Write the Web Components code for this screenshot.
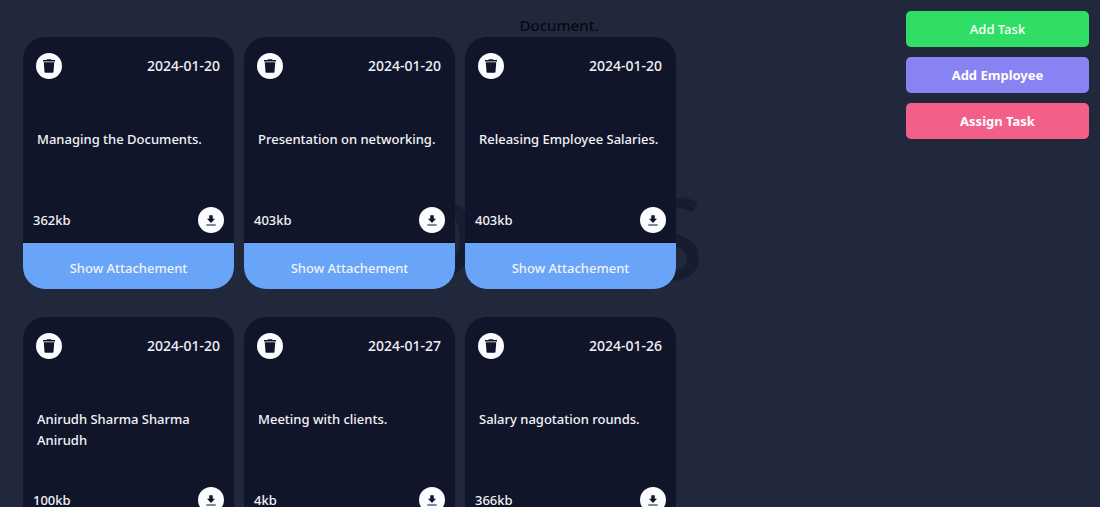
<!DOCTYPE html>
<html lang="en">
<head>
<meta charset="utf-8">
<title>Documents</title>
<style>
html, body { margin: 0; height: 100%; }
body {
  background: #22283b;
  color: #f1f3f8;
  font: 500 13px/21px "Noto Sans", "Open Sans", sans-serif;
  overflow: hidden;
}
</style>
</head>
<body>
<docs-app></docs-app>

<script>
class DocsBackdrop extends HTMLElement {
  constructor() {
    super();
    this.attachShadow({ mode: 'open' }).innerHTML = `
      <style>
        :host { position: absolute; inset: 0; display: flex; flex-direction: column; align-items: center; color: #060810; }
        p { margin: 0; padding: 15px 0 0 18px; font-size: 15px; }
        h1 { margin: auto 0; padding-bottom: 72px; color: #171d31; font-size: 114px; line-height: 114px; font-weight: 500; }
      </style>
      <p>Document.</p>
      <h1>DOCS</h1>`;
  }
}
customElements.define('docs-backdrop', DocsBackdrop);

class IconButton extends HTMLElement {
  constructor() {
    super();
    const trash = '<path d="M6 19.5c0 .9.7 1.5 1.6 1.5h8.800c.9 0 1.600-.6 1.600-1.500L19 7H5zM15.500 4l-1-1h-5l-1 1H4v2h16V4z"/>';
    const down = '<path d="M19 10h-4V4H9v6H5l7 7zM4 19.500v1.800h16v-1.800z"/>';
    const isTrash = this.getAttribute('icon') === 'trash';
    this.attachShadow({ mode: 'open' }).innerHTML = `
      <style>
        :host { display: block; }
        button { display: grid; place-items: center; width: 26px; height: 26px; padding: 0; border: 0; border-radius: 50%; background: #fbfcff; color: #11152a; cursor: pointer; }
        svg { width: ${isTrash ? 18 : 14}px; height: ${isTrash ? 18 : 14}px; fill: currentColor; }
      </style>
      <button type="button" aria-label="${isTrash ? 'Delete' : 'Download'}">
        <svg viewBox="0 0 24 24" aria-hidden="true">${isTrash ? trash : down}</svg>
      </button>`;
  }
}
customElements.define('icon-button', IconButton);

class DocCard extends HTMLElement {
  constructor() {
    super();
    this.attachShadow({ mode: 'open' }).innerHTML = `
      <style>
        :host { display: flex; flex-direction: column; height: 252px; border-radius: 22px; overflow: hidden; background: #11152a; }
        header { display: flex; align-items: center; justify-content: space-between; padding: 16px 14px 0 13px; }
        time { font-size: 14px; padding-bottom: 2px; }
        p { flex: 1; margin: 0; padding: 50px 14px 0; }
        .meta { display: flex; align-items: center; justify-content: space-between; padding: 0 10px 9px; }
        .show { height: 47px; padding: 5px 0 0; border: 0; border-top: 1px solid #0c1022; background: #68a4f8; color: inherit; font: inherit; cursor: pointer; }
      </style>
      <header><icon-button icon="trash"></icon-button><time>${this.getAttribute('date')}</time></header>
      <p><slot></slot></p>
      <div class="meta"><span>${this.getAttribute('size')}</span><icon-button icon="download"></icon-button></div>
      <button class="show" type="button">Show Attachement</button>`;
  }
}
customElements.define('doc-card', DocCard);

class ActionButton extends HTMLElement {
  constructor() {
    super();
    this.attachShadow({ mode: 'open' }).innerHTML = `
      <style>
        :host { display: block; }
        button { width: 100%; height: 36px; padding: 1px 0 0; border: 0; border-radius: 5px; background: var(--fill); color: #fff; font: inherit; font-weight: var(--weight, 700); cursor: pointer; }
      </style>
      <button type="button"><slot></slot></button>`;
  }
}
customElements.define('action-button', ActionButton);

class DocsApp extends HTMLElement {
  constructor() {
    super();
    this.attachShadow({ mode: 'open' }).innerHTML = `
      <style>
        :host { display: block; position: relative; height: 100%; overflow: hidden; }
        .page { position: relative; display: flex; justify-content: space-between; align-items: flex-start; gap: 24px; }
        main { flex: 0 1 653px; display: grid; grid-template-columns: repeat(auto-fill, minmax(200px, 1fr)); gap: 28px 10px; padding: 37px 0 28px 23px; }
        nav { flex: 0 0 183px; display: flex; flex-direction: column; gap: 10px; padding: 11px 11px 0 0; }
        .green { --fill: #30de65; --weight: 500; }
        .violet { --fill: #8783f2; }
        .pink { --fill: #f2608a; }
      </style>
      <docs-backdrop></docs-backdrop>
      <div class="page">
        <main>
          <doc-card date="2024-01-20" size="362kb">Managing the Documents.</doc-card>
          <doc-card date="2024-01-20" size="403kb">Presentation on networking.</doc-card>
          <doc-card date="2024-01-20" size="403kb">Releasing Employee Salaries.</doc-card>
          <doc-card date="2024-01-20" size="100kb">Anirudh Sharma Sharma Anirudh</doc-card>
          <doc-card date="2024-01-27" size="4kb">Meeting with clients.</doc-card>
          <doc-card date="2024-01-26" size="366kb">Salary nagotation rounds.</doc-card>
        </main>
        <nav aria-label="Actions">
          <action-button class="green">Add Task</action-button>
          <action-button class="violet">Add Employee</action-button>
          <action-button class="pink">Assign Task</action-button>
        </nav>
      </div>`;
  }
}
customElements.define('docs-app', DocsApp);
</script>
</body>
</html>
